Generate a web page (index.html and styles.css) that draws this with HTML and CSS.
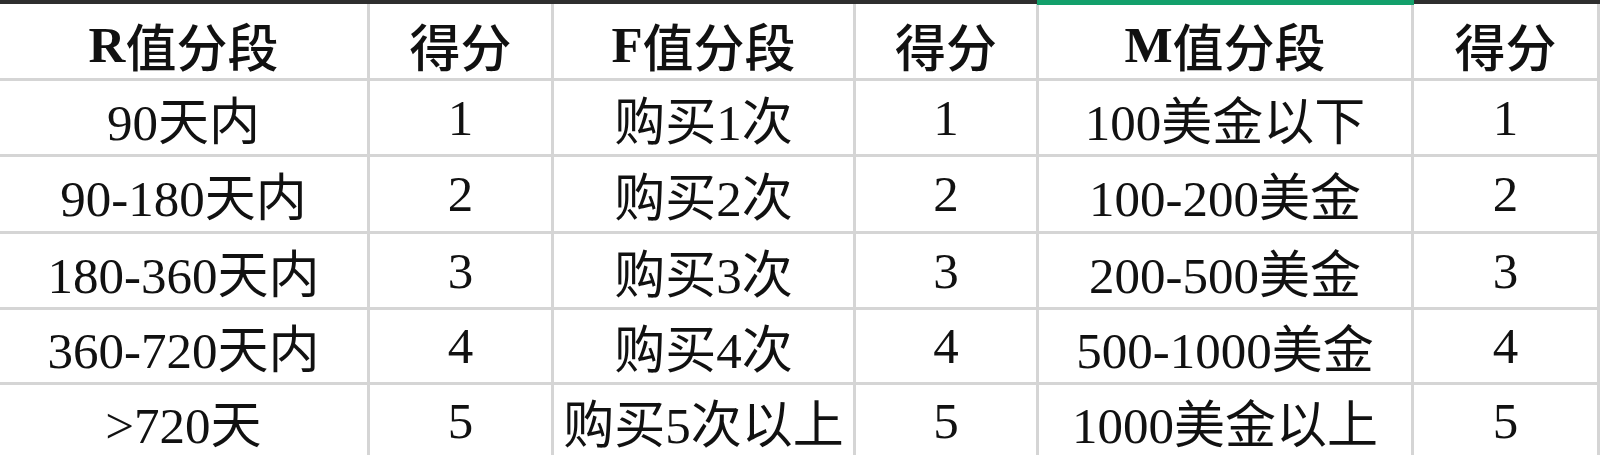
FILE: index.html
```html
<!DOCTYPE html>
<html lang="zh-CN">
<head>
<meta charset="utf-8">
<title>RFM 分段得分</title>
<link rel="stylesheet" href="styles.css">
</head>
<body>
<div class="topbar">
  <div class="seg dark lead"></div>
  <div class="seg green"></div>
  <div class="seg dark rest"></div>
</div>
<div class="sheet">
  <div class="cell head"><span class="key">R</span>值分段</div>
  <div class="cell head">得分</div>
  <div class="cell head"><span class="key">F</span>值分段</div>
  <div class="cell head">得分</div>
  <div class="cell head"><span class="key">M</span>值分段</div>
  <div class="cell head">得分</div>

  <div class="cell">90天内</div>
  <div class="cell">1</div>
  <div class="cell">购买1次</div>
  <div class="cell">1</div>
  <div class="cell">100美金以下</div>
  <div class="cell">1</div>

  <div class="cell">90-180天内</div>
  <div class="cell">2</div>
  <div class="cell">购买2次</div>
  <div class="cell">2</div>
  <div class="cell">100-200美金</div>
  <div class="cell">2</div>

  <div class="cell">180-360天内</div>
  <div class="cell">3</div>
  <div class="cell">购买3次</div>
  <div class="cell">3</div>
  <div class="cell">200-500美金</div>
  <div class="cell">3</div>

  <div class="cell">360-720天内</div>
  <div class="cell">4</div>
  <div class="cell">购买4次</div>
  <div class="cell">4</div>
  <div class="cell">500-1000美金</div>
  <div class="cell">4</div>

  <div class="cell">&gt;720天</div>
  <div class="cell">5</div>
  <div class="cell">购买5次以上</div>
  <div class="cell">5</div>
  <div class="cell">1000美金以上</div>
  <div class="cell">5</div>
</div>
</body>
</html>
```

FILE: styles.css
```css
html, body {
  margin: 0;
  padding: 0;
  background: #ffffff;
  overflow: hidden;
}

.topbar {
  display: flex;
  height: 4px;
  align-items: flex-start;
}

.seg {
  height: 4px;
}

.dark {
  background: #2e2e2e;
}

.lead {
  width: 1037px;
}

.green {
  width: 377px;
  height: 5px;
  background: #13a06b;
  position: relative;
  z-index: 2;
}

.rest {
  flex: 1;
}

.sheet {
  display: grid;
  grid-template-columns: 367px 181px 299px 180px 372px 183px;
  grid-template-rows: 74px 73px 74px 73px 72px 72px;
  gap: 3px;
  padding-right: 3px;
  background: #d5d5d5;
  width: 1597px;
}

.cell {
  background: #ffffff;
  display: flex;
  align-items: center;
  justify-content: center;
  font-family: "Liberation Serif", "Noto Sans CJK SC", serif;
  font-size: 51px;
  color: #111111;
  white-space: nowrap;
  overflow: hidden;
}

.head {
  font-weight: 500;
  padding-top: 8px;
  box-sizing: border-box;
}

.key {
  font-weight: 700;
}
```
